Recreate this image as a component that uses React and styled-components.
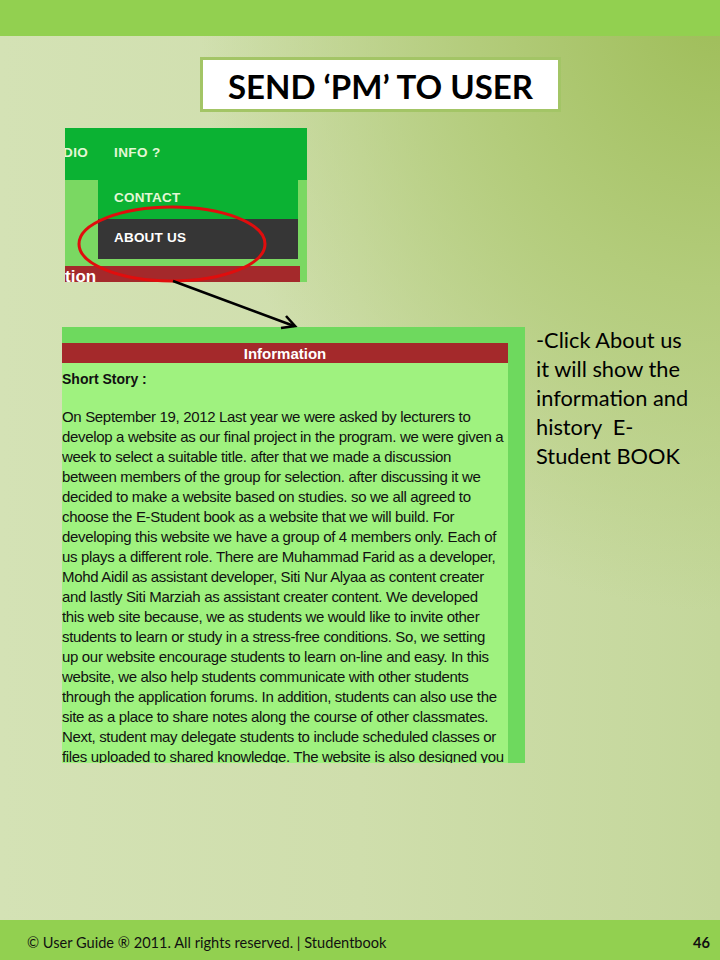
import styled, {createGlobalStyle} from 'styled-components';

const GlobalStyle = createGlobalStyle`
  html, body {
    margin: 0;
    padding: 0;
  }
  body {
    font-family: Lato, "Liberation Sans", sans-serif;
  }
`;

const storyLines = [
  'On September 19, 2012 Last year we were asked by lecturers to',
  'develop a website as our final project in the program. we were given a',
  'week to select a suitable title. after that we made a discussion',
  'between members of the group for selection. after discussing it we',
  'decided to make a website based on studies. so we all agreed to',
  'choose the E-Student book as a website that we will build. For',
  'developing this website we have a group of 4 members only. Each of',
  'us plays a different role. There are Muhammad Farid as a developer,',
  'Mohd Aidil as assistant developer, Siti Nur Alyaa as content creater',
  'and lastly Siti Marziah as assistant creater content. We developed',
  'this web site because, we as students we would like to invite other',
  'students to learn or study in a stress-free conditions. So, we setting',
  'up our website encourage students to learn on-line and easy. In this',
  'website, we also help students communicate with other students',
  'through the application forums. In addition, students can also use the',
  'site as a place to share notes along the course of other classmates.',
  'Next, student may delegate students to include scheduled classes or',
  'files uploaded to shared knowledge. The website is also designed you',
];

export default function App() {
  return (
    <>
      <GlobalStyle />
      <Slide>
        <TopBar />
        <Main>
          <TitleBox>SEND ‘PM’ TO USER</TitleBox>

          <MenuShot>
            <NavBar>
              <NavItem $w={51} $shift={-2}>DIO</NavItem>
              <NavItem>INFO ?</NavItem>
            </NavBar>
            <MenuLower>
              <SideFill $w={33} />
              <Dropdown>
                <DropItem>CONTACT</DropItem>
                <DropItem $active>ABOUT US</DropItem>
              </Dropdown>
              <SideFill $w={9} />
            </MenuLower>
            <MenuGap />
            <RedStrip>tion</RedStrip>
          </MenuShot>

          <BottomRow>
            <InfoShot>
              <InfoBody>
                <InfoHeader>Information</InfoHeader>
                <StoryTitle>Short Story :</StoryTitle>
                <Story>
                  {storyLines.map((line) => (
                    <StoryLine key={line}>{line}</StoryLine>
                  ))}
                </Story>
              </InfoBody>
            </InfoShot>
            <SideNote>
              -Click About us
              <br />
              it will show the
              <br />
              information and
              <br />
              history&nbsp; E-
              <br />
              Student BOOK
            </SideNote>
          </BottomRow>

          <Ellipse width="194" height="82" viewBox="0 0 194 82">
            <ellipse cx="97" cy="41" rx="93" ry="37" fill="none" stroke="#e00d0d" strokeWidth="3" />
          </Ellipse>
          <Arrow width="130" height="52" viewBox="0 0 130 52">
            <line x1="3" y1="2" x2="124" y2="47" stroke="#000" strokeWidth="2.6" />
            <polyline points="111,49 125,47 116,37" fill="none" stroke="#000" strokeWidth="2.6" strokeLinejoin="miter" />
          </Arrow>
        </Main>
        <Footer>
          <span>© User Guide ® 2011. All rights reserved. | Studentbook</span>
          <PageNo>46</PageNo>
        </Footer>
      </Slide>
    </>
  );
}

const Slide = styled.div`
  width: 720px;
  height: 960px;
  display: flex;
  flex-direction: column;
  overflow: hidden;
  background:
    radial-gradient(ellipse 85% 75% at 100% 0%, #9ebd58 0%, #b3cc7b 40%, rgba(205, 221, 170, 0) 85%),
    linear-gradient(to right, #d4e2b5 0%, #cfdeac 50%, #c4d79b 100%);
`;

const TopBar = styled.div`
  height: 36px;
  flex: none;
  background: #92d050;
`;

const Main = styled.div`
  position: relative;
  flex: 1;
  display: flex;
  flex-direction: column;
  align-items: flex-start;
  padding-top: 21px;
`;

const TitleBox = styled.div`
  margin-left: 200px;
  width: 361px;
  height: 55px;
  box-sizing: border-box;
  border: 3px solid #a3c566;
  background: #fff;
  display: flex;
  align-items: center;
  justify-content: center;
  font-family: Lato, "Liberation Sans", sans-serif;
  font-weight: 700;
  font-size: 33px;
  color: #000;
  padding-top: 2px;
`;

const MenuShot = styled.div`
  margin: 16px 0 0 65px;
  width: 242px;
  height: 154px;
  display: flex;
  flex-direction: column;
  overflow: hidden;
  background: #7ad862;
  font-family: "Liberation Sans", Arial, sans-serif;
  font-weight: 700;
  font-size: 13.5px;
`;

const NavBar = styled.div`
  height: 52px;
  flex: none;
  display: flex;
  align-items: center;
  padding-bottom: 4px;
  box-sizing: border-box;
  background: #0bb233;
  color: #e4f7d6;
`;

const NavItem = styled.span`
  width: ${(p) => (p.$w ? `${p.$w}px` : 'auto')};
  margin-left: ${(p) => p.$shift || 0}px;
  letter-spacing: 0.4px;
`;

const MenuLower = styled.div`
  height: 79px;
  flex: none;
  display: flex;
`;

const SideFill = styled.div`
  width: ${(p) => p.$w}px;
  flex: none;
  background: #7ad862;
`;

const Dropdown = styled.div`
  width: 200px;
  flex: none;
  display: flex;
  flex-direction: column;
`;

const DropItem = styled.div`
  height: ${(p) => (p.$active ? 40 : 39)}px;
  box-sizing: border-box;
  display: flex;
  align-items: center;
  padding: 0 0 4px 16px;
  background: ${(p) => (p.$active ? '#363636' : '#0bb233')};
  color: ${(p) => (p.$active ? '#ffffff' : '#e4f7d6')};
  letter-spacing: 0.2px;
`;

const MenuGap = styled.div`
  height: 7px;
  flex: none;
`;

const RedStrip = styled.div`
  width: 235px;
  height: 16px;
  flex: none;
  overflow: hidden;
  background: #a4292b;
  color: #fff;
  font-size: 17px;
  line-height: 22px;
`;

const BottomRow = styled.div`
  margin-top: 45px;
  display: flex;
  align-items: flex-start;
`;

const InfoShot = styled.div`
  margin-left: 62px;
  width: 463px;
  height: 436px;
  box-sizing: border-box;
  padding: 16px 17px 0 0;
  background: #6ed95e;
  display: flex;
`;

const InfoBody = styled.div`
  width: 446px;
  height: 420px;
  overflow: hidden;
  background: #9ff27f;
  font-family: "Liberation Sans", Arial, sans-serif;
  color: #111;
`;

const InfoHeader = styled.div`
  height: 20px;
  background: #a4292b;
  color: #fff;
  font-weight: 700;
  font-size: 15px;
  line-height: 21px;
  text-align: center;
`;

const StoryTitle = styled.div`
  margin-top: 6px;
  font-weight: 700;
  font-size: 14px;
  line-height: 20px;
`;

const Story = styled.div`
  margin-top: 18px;
  font-size: 15px;
  line-height: 20px;
`;

const StoryLine = styled.div`
  white-space: nowrap;
  letter-spacing: -0.33px;
`;

const SideNote = styled.div`
  margin: -2px 0 0 11px;
  font-family: Lato, "Liberation Sans", sans-serif;
  font-size: 21.8px;
  line-height: 29px;
  color: #000;
`;

const Ellipse = styled.svg`
  position: absolute;
  left: 75px;
  top: 167px;
`;

const Arrow = styled.svg`
  position: absolute;
  left: 170px;
  top: 243px;
`;

const Footer = styled.div`
  height: 40px;
  flex: none;
  display: flex;
  align-items: center;
  justify-content: space-between;
  padding: 4px 10px 0 27px;
  box-sizing: border-box;
  background: #92d050;
  font-family: Lato, "Liberation Sans", sans-serif;
  font-size: 14.6px;
  color: #111;
`;

const PageNo = styled.span`
  font-weight: 700;
`;
